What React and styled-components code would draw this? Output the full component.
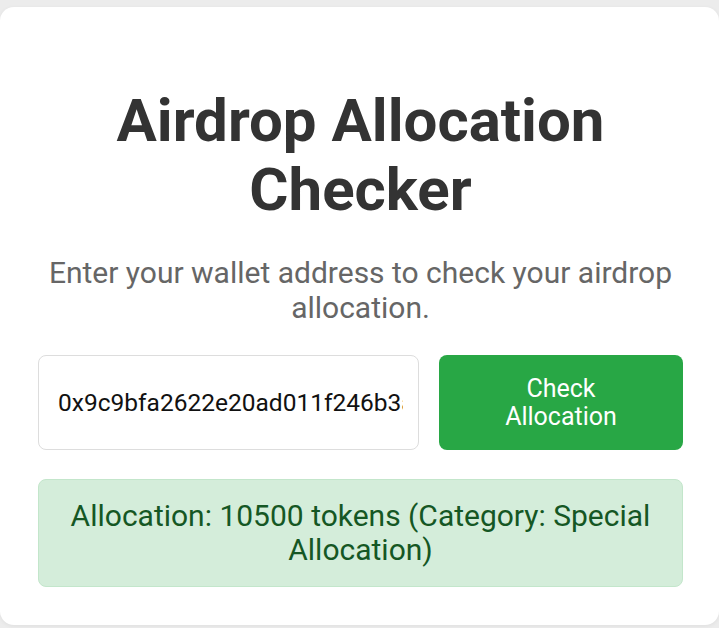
import React from "react";
import styled, { createGlobalStyle } from "styled-components";

const Global = createGlobalStyle`
  html, body { margin: 0; padding: 0; background: #ececec; }
  body { font-family: Roboto, "Noto Sans", Arial, sans-serif; }
  * { box-sizing: border-box; }
`;

const Page = styled.div`
  padding: 7px 0 3px;
`;

const Card = styled.div`
  background: #fff;
  border-radius: 14px;
  padding: 40px 36px 38px 38px;
  text-align: center;
  box-shadow: 0 1px 4px rgba(0, 0, 0, 0.06);
`;

const Title = styled.h1`
  margin: 39px 0 31px;
  font-size: 60px;
  line-height: 69px;
  font-weight: 700;
  color: #333;
`;

const Subtitle = styled.p`
  margin: 0 0 30px;
  font-size: 30px;
  line-height: 35px;
  color: #666;
`;

const Row = styled.div`
  display: flex;
  gap: 20px;
  margin-bottom: 29px;
`;

const Input = styled.input`
  flex: 1 1 0;
  min-width: 0;
  height: 95px;
  padding: 0 15px 0 19px;
  border: 1px solid #ddd;
  border-radius: 8px;
  font-family: Roboto, sans-serif;
  font-size: 24.5px;
  color: #111;
  background: #fff;
  outline: none;
`;

const Button = styled.button`
  flex: 0 0 244px;
  height: 95px;
  border: none;
  border-radius: 8px;
  background: #28a745;
  color: #fff;
  font-family: Roboto, sans-serif;
  font-size: 25px;
  line-height: 28px;
  padding: 0 50px;
  cursor: pointer;
`;

const Result = styled.div`
  background: #d4edda;
  color: #155724;
  border: 1px solid #c3e6cb;
  border-radius: 8px;
  padding: 19px 20px;
  font-size: 30px;
  line-height: 34px;
`;

export default function App() {
  return (
    <>
      <Global />
      <Page>
        <Card>
          <Title>Airdrop Allocation Checker</Title>
          <Subtitle>Enter your wallet address to check your airdrop allocation.</Subtitle>
          <Row>
            <Input
              type="text"
              defaultValue="0x9c9bfa2622e20ad011f246b3a1c2d4e5f6a7b8c9"
            />
            <Button>Check Allocation</Button>
          </Row>
          <Result>Allocation: 10500 tokens (Category: Special Allocation)</Result>
        </Card>
      </Page>
    </>
  );
}
